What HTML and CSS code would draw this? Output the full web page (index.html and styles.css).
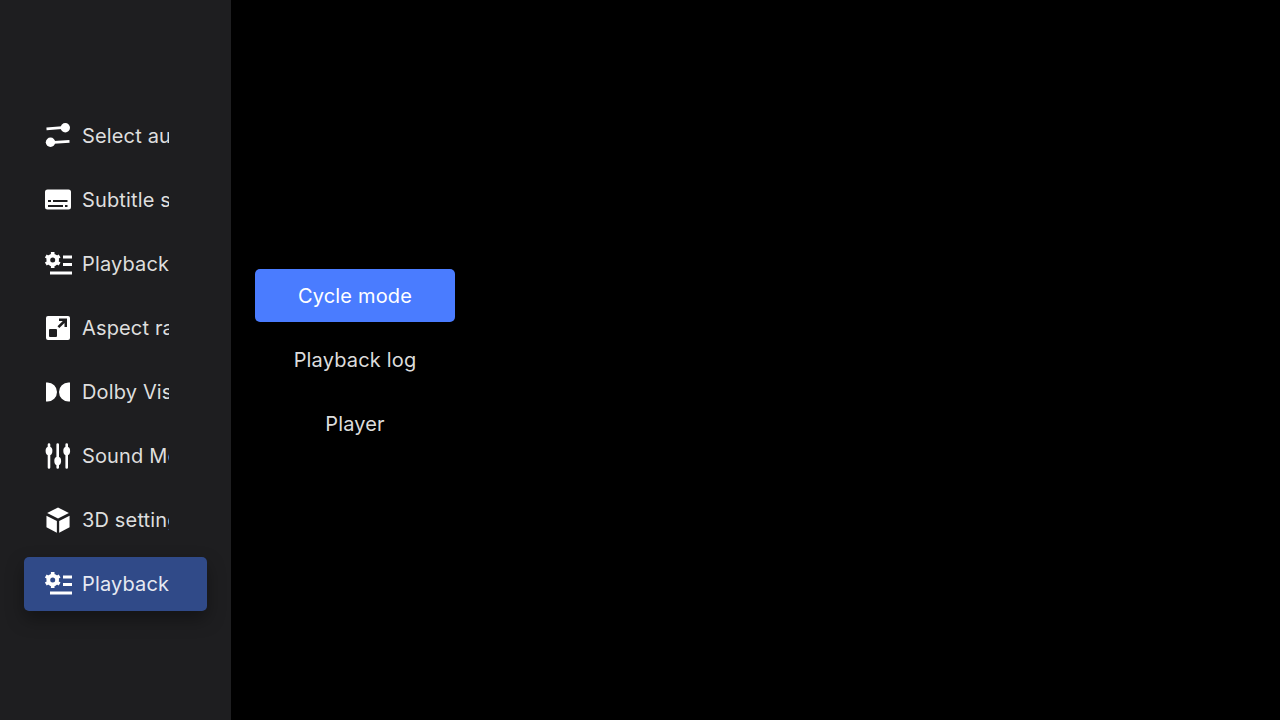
FILE: index.html
```html
<html>

<head>
    <meta name="viewport" content="width=device-width, initial-scale=1.0">
    <link rel="stylesheet" href="styles.css">
</head>

<body>
    <div class="sidebar">
        <div class="sideitem">
            <svg class="sideicon" viewBox="0 0 27 26">
                <path d="M1.500 5.800L17 4.700" class="line" />
                <circle cx="20.300" cy="4.700" r="4.700" class="solid" />
                <path d="M9 19.300L24.500 18.300" class="line" />
                <circle cx="5.500" cy="19.300" r="4.700" class="solid" />
            </svg>
            <span class="sidelabel">Select audio track</span>
        </div>
        <div class="sideitem">
            <svg class="sideicon" viewBox="0 0 27 26">
                <path fill-rule="evenodd" class="solid" d="M2.500 2.500H23.500A2.500 2.500 0 0 1 26 5V20A2.500 2.500 0 0 1 23.500 22.500H2.500A2.500 2.500 0 0 1 0 20V5A2.500 2.500 0 0 1 2.500 2.500ZM3 13V15H6V13ZM8 13V15H22.500V13ZM3 18V20H18V18ZM20 18V20H22.500V18Z" />
            </svg>
            <span class="sidelabel">Subtitle settings</span>
        </div>
        <div class="sideitem">
            <svg class="sideicon" viewBox="0 0 27 26">
                <circle cx="7.700" cy="9" r="4.400" class="gearbody" />
                <path d="M7.700 1V3.500M7.700 14.500V17M12.460 6.250L14.630 5M2.940 6.250L0.770 5M12.460 11.750L14.630 13M2.940 11.750L0.770 13" class="gearteeth" />
                <path d="M18 6H27M18 13.500H27M5 22H27" class="line" />
            </svg>
            <span class="sidelabel">Playback settings</span>
        </div>
        <div class="sideitem">
            <svg class="sideicon" viewBox="0 0 27 26">
                <path fill-rule="evenodd" class="solid" d="M3 1H23A2 2 0 0 1 25 3V23A2 2 0 0 1 23 25H3A2 2 0 0 1 1 23V3A2 2 0 0 1 3 1ZM5 14A1 1 0 0 0 4 15V21A1 1 0 0 0 5 22H11A1 1 0 0 0 12 21V15A1 1 0 0 0 11 14ZM14 3.500V6H17.800L12.500 11.300L14.300 13.100L19.500 7.900V12H22V3.500Z" />
            </svg>
            <span class="sidelabel">Aspect ratio</span>
        </div>
        <div class="sideitem">
            <svg class="sideicon" viewBox="0 0 27 26">
                <path class="solid" d="M1 3.500H2.500A9.500 9.500 0 0 1 2.500 22.500H1ZM25 3.500V22.500H23.500A9.500 9.500 0 0 1 23.500 3.500Z" />
            </svg>
            <span class="sidelabel">Dolby Vision</span>
        </div>
        <div class="sideitem">
            <svg class="sideicon" viewBox="0 0 27 26">
                <path d="M4 1.500V24.500M12.700 1.500V24.500M21.700 1.500V24.500" class="thinline" />
                <ellipse cx="4" cy="8" rx="3.400" ry="4.200" class="solid" />
                <ellipse cx="12.700" cy="18" rx="3.400" ry="4.200" class="solid" />
                <ellipse cx="21.700" cy="8" rx="3.400" ry="4.200" class="solid" />
            </svg>
            <span class="sidelabel">Sound Mode</span>
        </div>
        <div class="sideitem">
            <svg class="sideicon" viewBox="0 0 27 27">
                <path class="solid" d="M13 0.500L24.300 6.300L13 12L1.700 6.300ZM1 9L11.800 14.500V26.800L1 21ZM25 9V21L14.200 26.800V14.500Z" />
            </svg>
            <span class="sidelabel">3D settings</span>
        </div>
        <div class="sideitem active">
            <svg class="sideicon" viewBox="0 0 27 26">
                <circle cx="7.700" cy="9" r="4.400" class="gearbody" />
                <path d="M7.700 1V3.500M7.700 14.500V17M12.460 6.250L14.630 5M2.940 6.250L0.770 5M12.460 11.750L14.630 13M2.940 11.750L0.770 13" class="gearteeth" />
                <path d="M18 6H27M18 13.500H27M5 22H27" class="line" />
            </svg>
            <span class="sidelabel">Playback settings</span>
        </div>
    </div>
    <div class="submenu">
        <div class="subitem selected">Cycle mode</div>
        <div class="subitem">Playback log</div>
        <div class="subitem">Player</div>
    </div>
</body>

</html>
```
FILE: styles.css
```css
body {
    margin: 0px;
    height: 720px;
    display: flex;
    overflow: hidden;
    background-color: #000000;
    font-family: Inter, "Noto Sans", sans-serif;
}

.sidebar {
    width: 231px;
    box-sizing: border-box;
    background-color: #1e1e20;
    padding: 109px 24px 0 24px;
    display: flex;
    flex-direction: column;
    gap: 10px;
}

.sideitem {
    width: 183px;
    height: 54px;
    box-sizing: border-box;
    padding-left: 21px;
    display: flex;
    align-items: center;
    border-radius: 5px;
}

.sideitem.active {
    background-color: #304a88;
    box-shadow: 0px 8px 18px rgba(0, 0, 0, 0.35);
}

.sideicon {
    width: 27px;
    height: 26px;
    flex-shrink: 0;
    margin-right: 10px;
    overflow: visible;
}

.solid {
    fill: #ffffff;
}

.line {
    stroke: #ffffff;
    stroke-width: 2.8;
    fill: none;
}

.thinline {
    stroke: #ffffff;
    stroke-width: 2.6;
    fill: none;
    stroke-linecap: round;
}

.gearbody {
    stroke: #ffffff;
    stroke-width: 3.8;
    fill: none;
}

.gearteeth {
    stroke: #ffffff;
    stroke-width: 3.6;
    fill: none;
}

.sidelabel {
    width: 87px;
    overflow: hidden;
    white-space: nowrap;
    font-size: 20px;
    letter-spacing: 0.15px;
    color: #dedede;
}

.active .sidelabel {
    color: #e6e9f2;
}

.submenu {
    margin-left: 24px;
    padding-top: 269px;
    width: 200px;
    display: flex;
    flex-direction: column;
    gap: 11px;
}

.subitem {
    height: 53px;
    display: flex;
    align-items: center;
    justify-content: center;
    border-radius: 5px;
    font-size: 20px;
    letter-spacing: 0.17px;
    color: #dcdcdc;
}

.subitem.selected {
    background-color: #4a7cff;
    color: #ffffff;
}
```
